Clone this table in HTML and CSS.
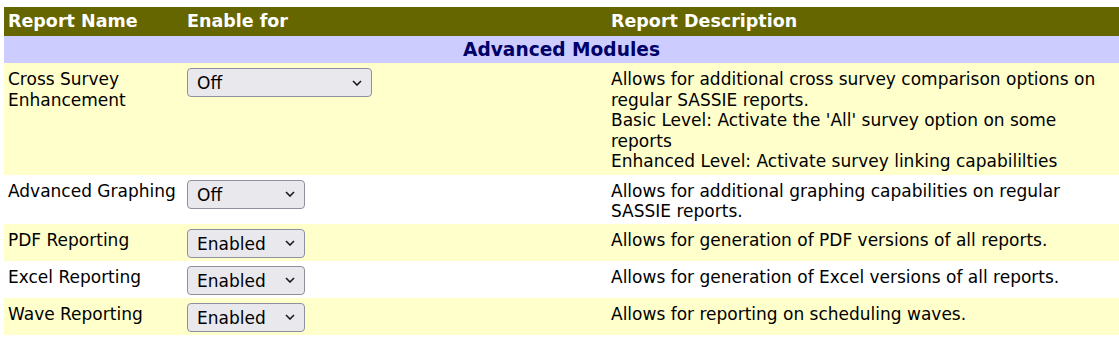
FILE: index.html
```html
<!DOCTYPE html>
<html>
<head>
<meta charset="utf-8">
<link rel="stylesheet" href="styles.css">
</head>
<body>
<table class="reports">
  <colgroup>
    <col class="c-name">
    <col class="c-enable">
    <col class="c-desc">
  </colgroup>
  <thead>
    <tr class="head">
      <th>Report Name</th>
      <th>Enable for</th>
      <th>Report Description</th>
    </tr>
  </thead>
  <tbody>
    <tr class="section">
      <td colspan="3">Advanced Modules</td>
    </tr>
    <tr class="odd multi">
      <td>Cross Survey Enhancement</td>
      <td><div class="sel sel-wide"><span>Off</span><svg viewBox="0 0 10 6" class="chev"><path d="M1 1 L5 5 L9 1" /></svg></div></td>
      <td>Allows for additional cross survey comparison options on regular SASSIE reports.<br>Basic Level: Activate the 'All' survey option on some reports<br>Enhanced Level: Activate survey linking capabililties</td>
    </tr>
    <tr class="even">
      <td>Advanced Graphing</td>
      <td><div class="sel"><span>Off</span><svg viewBox="0 0 10 6" class="chev"><path d="M1 1 L5 5 L9 1" /></svg></div></td>
      <td>Allows for additional graphing capabilities on regular SASSIE reports.</td>
    </tr>
    <tr class="odd">
      <td>PDF Reporting</td>
      <td><div class="sel"><span>Enabled</span><svg viewBox="0 0 10 6" class="chev"><path d="M1 1 L5 5 L9 1" /></svg></div></td>
      <td>Allows for generation of PDF versions of all reports.</td>
    </tr>
    <tr class="even">
      <td>Excel Reporting</td>
      <td><div class="sel"><span>Enabled</span><svg viewBox="0 0 10 6" class="chev"><path d="M1 1 L5 5 L9 1" /></svg></div></td>
      <td>Allows for generation of Excel versions of all reports.</td>
    </tr>
    <tr class="odd">
      <td>Wave Reporting</td>
      <td><div class="sel"><span>Enabled</span><svg viewBox="0 0 10 6" class="chev"><path d="M1 1 L5 5 L9 1" /></svg></div></td>
      <td>Allows for reporting on scheduling waves.</td>
    </tr>
  </tbody>
</table>
</body>
</html>
```

FILE: styles.css
```css
html, body {
  margin: 0;
  padding: 0;
  background: #ffffff;
}
body {
  padding: 7px 0 0 4px;
  font-family: "DejaVu Sans", Verdana, sans-serif;
  font-size: 17px;
  line-height: 20.5px;
  color: #000000;
}
.reports {
  border-collapse: collapse;
  table-layout: fixed;
  width: 1115px;
}
.c-name { width: 179px; }
.c-enable { width: 424px; }
.reports th, .reports td {
  padding: 6px 4px 2px 4px;
  text-align: left;
  vertical-align: top;
}
.reports .multi td {
  padding-bottom: 3px;
}
.head {
  background: #666600;
  color: #ffffff;
}
.head th {
  font-weight: bold;
  font-size: 17.5px;
  padding: 4px 4px 4px 4px;
}
.section {
  background: #ccccff;
}
.section td {
  text-align: center;
  font-weight: bold;
  font-size: 18.6px;
  color: #000066;
  padding: 4px 4px 3px 4px;
}
.odd { background: #ffffcc; }
.even { background: #ffffff; }
.sel {
  display: flex;
  align-items: center;
  justify-content: space-between;
  box-sizing: border-box;
  width: 118px;
  height: 29px;
  margin: -1px 0 1px 0;
  padding: 0 9px 0 9px;
  background: #e9e9ed;
  border: 1px solid #8f8f9d;
  border-radius: 4px;
  font-size: 17px;
}
.sel span {
  padding-top: 2px;
}
.sel-wide { width: 185px; }
.chev {
  width: 10px;
  height: 6px;
  fill: none;
  stroke: #1a1a1a;
  stroke-width: 1.6;
}
```
